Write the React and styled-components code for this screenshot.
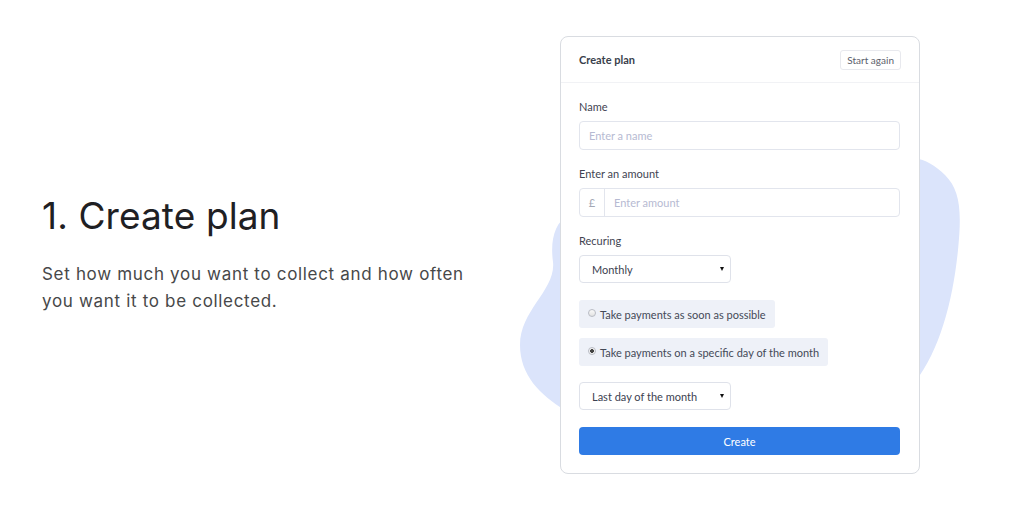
import React from 'react';
import styled, { createGlobalStyle } from 'styled-components';

const GlobalStyle = createGlobalStyle`
  html, body {
    margin: 0;
    padding: 0;
    background: #ffffff;
  }
  * {
    box-sizing: border-box;
  }
`;

const Page = styled.div`
  width: 1024px;
  height: 512px;
  display: grid;
  grid-template-columns: 560px 360px;
  align-items: start;
  overflow: hidden;
`;

const Intro = styled.div`
  padding: 194px 0 0 42px;
  font-family: Inter, "Liberation Sans", sans-serif;
`;

const Heading = styled.h1`
  margin: 0;
  font-size: 37px;
  line-height: 44px;
  font-weight: 400;
  color: #1f2023;
  letter-spacing: 0.1px;
`;

const Lead = styled.p`
  margin: 23px 0 0;
  width: 440px;
  font-size: 17px;
  line-height: 27px;
  letter-spacing: 0.68px;
  color: #474849;
`;

const Stage = styled.div`
  position: relative;
  margin-top: 36px;
`;

const Blob = styled.svg`
  position: absolute;
  left: -50px;
  top: 119px;
  z-index: 0;
`;

const Card = styled.div`
  position: relative;
  z-index: 1;
  width: 360px;
  height: 438px;
  background: #fff;
  border: 1px solid #d9dce1;
  border-radius: 8px;
  font-family: Lato, "Liberation Sans", sans-serif;
  color: #3c4150;
`;

const CardHeader = styled.div`
  height: 46px;
  display: flex;
  align-items: center;
  justify-content: space-between;
  padding: 0 18px;
  border-bottom: 1px solid #f1f2f5;
`;

const CardTitle = styled.div`
  font-size: 11px;
  font-weight: 700;
  color: #3a3f4c;
`;

const GhostButton = styled.button`
  height: 20px;
  padding: 0 6px;
  border: 1px solid #e8e9ee;
  border-radius: 3px;
  background: #fff;
  font-family: inherit;
  font-size: 10px;
  color: #5b606c;
`;

const CardBody = styled.div`
  padding: 17px 18px 0;
  display: flex;
  flex-direction: column;
  align-items: flex-start;
`;

const Label = styled.div`
  font-size: 11px;
  line-height: 14px;
  color: #3f4452;
  margin-top: ${p => p.first ? 0 : 17}px;
`;

const InputBox = styled.div`
  margin-top: 7px;
  width: 321px;
  height: 29px;
  display: flex;
  align-items: stretch;
  border: 1px solid #e2e5ed;
  border-radius: 4px;
  font-size: 11px;
`;

const Addon = styled.div`
  width: 25px;
  display: flex;
  align-items: center;
  justify-content: center;
  border-right: 1px solid #e2e5ed;
  color: #a3a7b4;
`;

const Placeholder = styled.div`
  display: flex;
  align-items: center;
  padding-left: 9px;
  color: #b6bad2;
`;

const Select = styled.div`
  margin-top: ${p => p.gap}px;
  width: 152px;
  height: 28px;
  display: flex;
  align-items: center;
  justify-content: space-between;
  padding: 0 6px 0 12px;
  border: 1px solid #dfe2ea;
  border-radius: 4px;
  font-size: 11px;
  color: #3c4150;
`;

const Caret = styled.span`
  width: 0;
  height: 0;
  border-left: 2.5px solid transparent;
  border-right: 2.5px solid transparent;
  border-top: 4px solid #111;
`;

const RadioRow = styled.div`
  margin-top: ${p => p.gap}px;
  height: 28px;
  display: flex;
  align-items: center;
  gap: 4px;
  padding: 0 9px;
  background: #eef1f8;
  border-radius: 3px;
  font-size: 11px;
  color: #444957;
`;

const RadioDot = styled.span`
  width: 8px;
  height: 8px;
  border-radius: 50%;
  border: 1px solid #b9bcc4;
  background: ${p => p.checked
    ? 'radial-gradient(circle, #444 0 1.6px, #f4f4f4 2.2px)'
    : 'linear-gradient(#fafafa, #e2e2e2)'};
  margin-top: -2px;
`;

const PrimaryButton = styled.button`
  margin-top: 17px;
  width: 321px;
  height: 28px;
  border: none;
  border-radius: 4px;
  background: #2f7be5;
  color: #fff;
  font-family: inherit;
  font-size: 11px;
`;

const App = () => (
  <>
    <GlobalStyle />
    <Page>
      <Intro>
        <Heading>1. Create plan</Heading>
        <Lead>Set how much you want to collect and how often you want it to be collected.</Lead>
      </Intro>
      <Stage>
        <Blob width="460" height="262" viewBox="0 0 460 262">
          <path
            fill="#dbe4fb"
            d="M58 61 C45 67 40 85 43 107 C46 135 10 155 10 190 C10 220 30 240 55 255 L405 227 C430 195 443 145 448 95 C452 55 450 35 435 20 C425 10 415 5 405 3 Z"
          />
        </Blob>
        <Card>
          <CardHeader>
            <CardTitle>Create plan</CardTitle>
            <GhostButton>Start again</GhostButton>
          </CardHeader>
          <CardBody>
            <Label first>Name</Label>
            <InputBox>
              <Placeholder>Enter a name</Placeholder>
            </InputBox>
            <Label>Enter an amount</Label>
            <InputBox>
              <Addon>£</Addon>
              <Placeholder>Enter amount</Placeholder>
            </InputBox>
            <Label>Recuring</Label>
            <Select gap={7}>
              Monthly
              <Caret />
            </Select>
            <RadioRow gap={17}>
              <RadioDot />
              Take payments as soon as possible
            </RadioRow>
            <RadioRow gap={10}>
              <RadioDot checked />
              Take payments on a specific day of the month
            </RadioRow>
            <Select gap={16}>
              Last day of the month
              <Caret />
            </Select>
            <PrimaryButton>Create</PrimaryButton>
          </CardBody>
        </Card>
      </Stage>
    </Page>
  </>
);

export default App;
